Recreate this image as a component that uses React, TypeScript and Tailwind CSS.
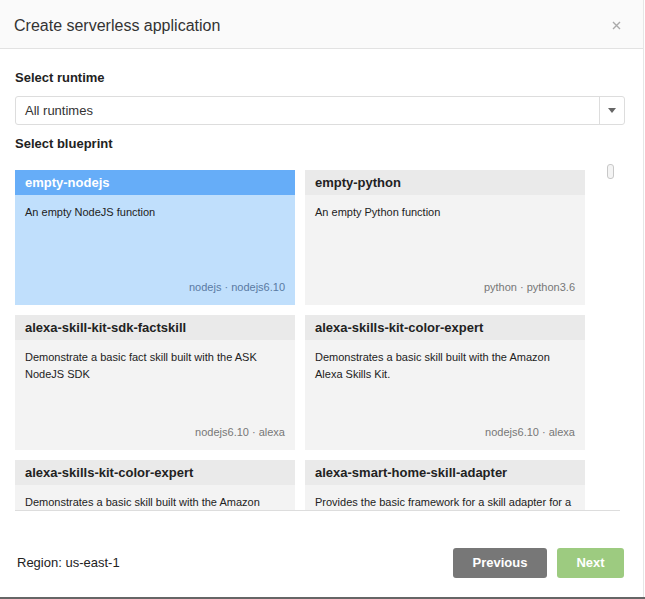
import React from "react";

type Blueprint = {
  name: string;
  description: string;
  meta: string;
};

const blueprints: Blueprint[] = [
  { name: "empty-nodejs", description: "An empty NodeJS function", meta: "nodejs · nodejs6.10" },
  { name: "empty-python", description: "An empty Python function", meta: "python · python3.6" },
  {
    name: "alexa-skill-kit-sdk-factskill",
    description: "Demonstrate a basic fact skill built with the ASK NodeJS SDK",
    meta: "nodejs6.10 · alexa",
  },
  {
    name: "alexa-skills-kit-color-expert",
    description: "Demonstrates a basic skill built with the Amazon Alexa Skills Kit.",
    meta: "nodejs6.10 · alexa",
  },
  {
    name: "alexa-skills-kit-color-expert",
    description: "Demonstrates a basic skill built with the Amazon Alexa Skills Kit.",
    meta: "nodejs6.10 · alexa",
  },
  {
    name: "alexa-smart-home-skill-adapter",
    description: "Provides the basic framework for a skill adapter for a smart home skill.",
    meta: "nodejs6.10 · alexa",
  },
];

const BlueprintCard = ({ item, selected }: { item: Blueprint; selected: boolean }) => (
  <div className={`flex h-[135px] flex-col ${selected ? "bg-[#c0dffc]" : "bg-[#f3f3f3]"}`}>
    <div
      className={`flex h-[25px] shrink-0 items-center px-[10px] text-[13px] font-bold ${
        selected ? "bg-[#66adf8] text-white" : "bg-[#eaeaea] text-[#222]"
      }`}
    >
      {item.name}
    </div>
    <div className="flex flex-1 flex-col justify-between px-[10px] pb-[11px] pt-[9px]">
      <p className="text-[11px] leading-[17px] text-[#222]">{item.description}</p>
      <p className={`text-right text-[11px] leading-[14px] ${selected ? "text-[#5a7aa3]" : "text-[#777]"}`}>
        {item.meta}
      </p>
    </div>
  </div>
);

export default function App() {
  return (
    <div className="h-[599px] w-[645px] bg-white font-['Liberation_Sans',Arial,sans-serif] text-[#333]">
      <div className="flex h-[597px] w-[644px] flex-col border-r border-[#e6e6e6] bg-white">
        {/* header */}
        <div className="flex h-[49px] shrink-0 items-center justify-between border-b border-[#e2e2e2] bg-[#fafafa] pl-[14px] pr-[22px] pt-[3px]">
          <h1 className="text-[16px] text-[#333]">Create serverless application</h1>
          <svg width="9" height="9" viewBox="0 0 9 9" className="text-[#aaa]">
            <path d="M1 1 L8 8 M8 1 L1 8" stroke="currentColor" strokeWidth="1.4" />
          </svg>
        </div>

        {/* body */}
        <div className="flex flex-1 flex-col px-[15px] pt-[21px]">
          <div className="text-[13px] font-bold leading-[16px] text-[#222]">Select runtime</div>
          <div className="mt-[10px] flex h-[29px] w-[610px] items-stretch rounded-[3px] border border-[#ddd] bg-white">
            <div className="flex flex-1 items-center pl-[9px] text-[13px] text-[#333]">All runtimes</div>
            <div className="flex w-[25px] items-center justify-center border-l border-[#ddd]">
              <svg width="8" height="5" viewBox="0 0 8 5">
                <path d="M0 0 H8 L4 5 Z" fill="#666" />
              </svg>
            </div>
          </div>

          <div className="mt-[11px] text-[13px] font-bold leading-[16px] text-[#222]">Select blueprint</div>

          <div className="relative mt-[8px] h-[351px] w-[605px] shrink-0 overflow-hidden border-b border-[#ddd] pt-[10px]">
            <div className="grid w-[570px] grid-cols-2 gap-[10px]">
              {blueprints.map((b, i) => (
                <BlueprintCard key={i} item={b} selected={i === 0} />
              ))}
            </div>
            <div className="absolute right-[6px] top-[4px] h-[15px] w-[7px] rounded-[3px] border border-[#c8c8c8] bg-[#f4f4f4]" />
          </div>

          {/* footer */}
          <div className="flex items-center justify-between pl-[2px] pt-[37px]">
            <span className="text-[13px] text-[#222]">Region: us-east-1</span>
            <div className="flex gap-[10px] pr-[4px]">
              <button className="h-[30px] w-[94px] rounded-[3px] bg-[#777] text-[13px] font-bold text-white">
                Previous
              </button>
              <button className="h-[30px] w-[67px] rounded-[3px] bg-[#9dcb80] text-[13px] font-bold text-white">
                Next
              </button>
            </div>
          </div>
        </div>
      </div>
      <div className="h-[2px] w-[645px] bg-[#666]" />
    </div>
  );
}
